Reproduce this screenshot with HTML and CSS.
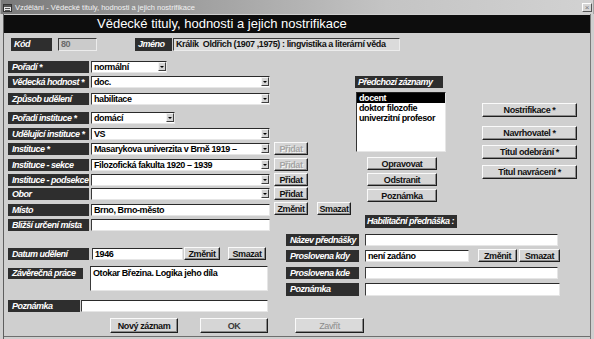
FILE: index.html
```html
<!DOCTYPE html>
<html lang="cs">
<head>
<meta charset="utf-8">
<title>Vzdělání</title>
<link rel="stylesheet" href="styles.css">
</head>
<body>
<div class="window">
  <div class="titlebar">
    <svg class="ticon" width="9" height="8" viewBox="0 0 9 8"><rect x="0.5" y="0.5" width="8" height="7" fill="#e8e8e8" stroke="#333"/><rect x="1" y="1" width="7" height="2" fill="#555"/><line x1="2" y1="4.5" x2="7" y2="4.5" stroke="#555"/><line x1="2" y1="6.5" x2="7" y2="6.5" stroke="#555"/></svg>
    <span class="ttext">Vzdělání - Vědecké tituly, hodnosti a jejich nostrifikace</span>
    <span class="tclose">×</span>
  </div>
  <div class="client">
    <div class="banner">Vědecké tituly, hodnosti a jejich nostrifikace</div>

    <div class="idrow">
      <div class="lbl lbl-kod">Kód</div>
      <div class="ro ro-kod">80</div>
      <div class="lbl lbl-jmeno">Jméno</div>
      <div class="ro ro-jmeno">Králík&nbsp; Oldřich (1907 ,1975) : lingvistika a literární věda</div>
    </div>

    <div class="sec-a">
      <div class="col-left">
        <div class="row r-poradi"><div class="lbl">Pořadí *</div><div class="fld combo w-s">normální<span class="arr"></span></div></div>
        <div class="row r-hodnost"><div class="lbl">Vědecká hodnost *</div><div class="fld combo w-l">doc.<span class="arr"></span></div></div>
        <div class="row r-zpusob"><div class="lbl">Způsob udělení</div><div class="fld combo w-l">habilitace<span class="arr"></span></div></div>
        <div class="row r-porinst"><div class="lbl">Pořadí instituce *</div><div class="fld combo w-m">domácí<span class="arr"></span></div></div>
        <div class="row r-udel"><div class="lbl">Udělující instituce *</div><div class="fld combo w-l">VS<span class="arr"></span></div></div>
        <div class="row r-inst"><div class="lbl">Instituce *</div><div class="fld combo w-l">Masarykova univerzita v Brně 1919 –<span class="arr"></span></div><button class="btn btn-add disabled">Přidat</button></div>
        <div class="row r-sekce"><div class="lbl">Instituce - sekce</div><div class="fld combo w-l">Filozofická fakulta 1920 – 1939<span class="arr"></span></div><button class="btn btn-add disabled">Přidat</button></div>
        <div class="row r-podsekce"><div class="lbl">Instituce - podsekce</div><div class="fld combo w-l"><span class="arr"></span></div><button class="btn btn-add">Přidat</button></div>
        <div class="row r-obor"><div class="lbl">Obor</div><div class="fld combo w-l"><span class="arr"></span></div><button class="btn btn-add">Přidat</button></div>
        <div class="row r-misto"><div class="lbl">Místo</div><div class="fld w-l">Brno, Brno-město</div><button class="btn btn-add">Změnit</button><button class="btn btn-del">Smazat</button></div>
      </div>

      <div class="col-mid">
        <div class="lbl lbl-pred">Předchozí záznamy</div>
        <div class="listbox">
          <div class="item selected">docent</div>
          <div class="item">doktor filozofie</div>
          <div class="item">univerzitní profesor</div>
        </div>
        <button class="btn btn-mid btn-oprav">Opravovat</button>
        <button class="btn btn-mid">Odstranit</button>
        <button class="btn btn-mid">Poznámka</button>
      </div>

      <div class="col-right">
        <button class="btn btn-side b-nostr">Nostrifikace *</button>
        <button class="btn btn-side b-navrh">Navrhovatel *</button>
        <button class="btn btn-side b-odebr">Titul odebrání *</button>
        <button class="btn btn-side b-navr">Titul navrácení *</button>
      </div>
    </div>

    <div class="sec-b">
      <div class="col-left2">
        <div class="row r-blizsi"><div class="lbl">Bližší určení místa</div><div class="fld w-l">&nbsp;</div></div>
        <div class="row r-datum"><div class="lbl">Datum udělení</div><div class="fld fld-datum">1946</div><button class="btn b-dzmen">Změnit</button><button class="btn b-dsmaz">Smazat</button></div>
        <div class="row r-prace"><div class="lbl lbl-prace">Závěrečná práce</div><div class="fld area">Otokar Březina. Logika jeho díla</div></div>
        <div class="row r-pozn"><div class="lbl lbl-pozn">Poznámka</div><div class="fld fld-pozn">&nbsp;</div></div>
      </div>

      <div class="col-hab">
        <div class="lbl lbl-hab">Habilitační přednáška :</div>
        <div class="row h-nazev"><div class="lbl lbl-h">Název přednášky</div><div class="fld w-h">&nbsp;</div></div>
        <div class="row h-kdy"><div class="lbl lbl-h">Proslovena kdy</div><div class="fld fld-kdy">není zadáno</div><button class="btn b-hzmen">Změnit</button><button class="btn b-hsmaz">Smazat</button></div>
        <div class="row h-kde"><div class="lbl lbl-h">Proslovena kde</div><div class="fld w-h">&nbsp;</div></div>
        <div class="row h-pozn"><div class="lbl lbl-h">Poznámka</div><div class="fld w-h2">&nbsp;</div></div>
      </div>
    </div>

    <div class="sec-c">
      <button class="btn btn-bottom b-novy">Nový záznam</button>
      <button class="btn btn-bottom b-ok">OK</button>
      <button class="btn btn-bottom b-zavrit">Zavřít</button>
    </div>
  </div>
</div>
</body>
</html>
```

FILE: styles.css
```css
* { box-sizing: border-box; margin: 0; padding: 0; }

html, body {
  width: 594px;
  height: 339px;
  overflow: hidden;
  background: #cfcfcf;
}

body {
  font-family: "Liberation Sans", Arial, sans-serif;
}

.window {
  width: 594px;
  height: 339px;
  display: flex;
  flex-direction: column;
  background: #cfcfcf;
  box-shadow: inset 0 0 0 1px #a4a4a4;
}

/* ---------- title bar ---------- */
.titlebar {
  flex: none;
  height: 14px;
  margin: 0 1px;
  padding-top: 1px;
  display: flex;
  align-items: center;
  background: linear-gradient(to right, #7a7a7a 0%, #9c9c9c 30%, #c4c4c4 65%, #d2d2d2 100%);
}

.ticon { margin-left: 2px; flex: none; }

.ttext {
  margin-left: 3px;
  font-size: 7.5px;
  color: #f2f2f2;
  white-space: nowrap;
}

.tclose {
  margin-left: auto;
  margin-right: 1px;
  width: 10px;
  height: 9px;
  background: #d6d6d6;
  border-top: 1px solid #fff;
  border-left: 1px solid #fff;
  border-right: 1px solid #555;
  border-bottom: 1px solid #555;
  font-size: 8px;
  line-height: 7px;
  text-align: center;
  color: #777;
}

/* ---------- client area ---------- */
.client {
  flex: 1;
  display: flex;
  flex-direction: column;
  background:
    linear-gradient(#5e5e5e, #5e5e5e) 3px 0 / 1px 100% no-repeat,
    linear-gradient(#7a7a7a, #7a7a7a) 590px 0 / 1px 100% no-repeat,
    linear-gradient(#6e6e6e, #6e6e6e) 3px 322px / 588px 1px no-repeat,
    #cfcfcf;
}

.banner {
  margin: 1px 0 0 4px;
  width: 586px;
  height: 18px;
  background: #0d0d0d;
  color: #fff;
  font-size: 13px;
  line-height: 18px;
  padding-left: 93px;
  white-space: nowrap;
}

/* ---------- generic controls ---------- */
.lbl {
  flex: none;
  width: 81px;
  height: 12px;
  background: #2e2e2e;
  color: #fff;
  font-style: italic;
  font-weight: bold;
  font-size: 9px;
  letter-spacing: -0.5px;
  line-height: 12px;
  padding-left: 4px;
  white-space: nowrap;
  overflow: hidden;
}

.fld {
  flex: none;
  height: 12px;
  margin-left: 2px;
  background: #fff;
  border-top: 1px solid #2a2a2a;
  border-left: 1px solid #3a3a3a;
  border-right: 1px solid #e6e6e6;
  border-bottom: 1px solid #e6e6e6;
  font-weight: bold;
  font-size: 9px;
  letter-spacing: -0.4px;
  line-height: 10px;
  padding-left: 2px;
  color: #000;
  white-space: nowrap;
  overflow: hidden;
}

.combo {
  display: flex;
  align-items: flex-start;
}

.arr {
  margin-left: auto;
  width: 8px;
  height: 9px;
  background: #d4d4d4;
  border-top: 1px solid #f4f4f4;
  border-left: 1px solid #f4f4f4;
  border-right: 1px solid #404040;
  border-bottom: 1px solid #404040;
  display: flex;
  align-items: center;
  justify-content: center;
}

.arr::before {
  content: "";
  border-left: 2px solid transparent;
  border-right: 2px solid transparent;
  border-top: 2px solid #000;
}

.w-s { width: 76px; }
.w-m { width: 84px; }
.w-l { width: 179px; }

.btn {
  flex: none;
  height: 13px;
  background: #d6d6d6;
  border-top: 1px solid #fafafa;
  border-left: 1px solid #fafafa;
  border-right: 1px solid #1e1e1e;
  border-bottom: 1px solid #1e1e1e;
  box-shadow: inset -1px -1px 0 #8a8a8a;
  font-family: "Liberation Sans", Arial, sans-serif;
  font-weight: bold;
  font-size: 9px;
  letter-spacing: -0.4px;
  line-height: 10px;
  color: #111;
  display: flex;
  align-items: center;
  justify-content: center;
  white-space: nowrap;
}

.btn.disabled {
  color: #a4a4a4;
  text-shadow: 1px 1px 0 #f4f4f4;
}

.row {
  display: flex;
  align-items: flex-start;
  height: 12px;
}

/* ---------- id row ---------- */
.idrow {
  display: flex;
  margin-top: 5px;
  height: 13px;
}

.lbl-kod { margin-left: 11px; width: 41px; height: 13px; line-height: 13px; padding-left: 3px; }
.lbl-jmeno { margin-left: 38px; width: 37px; height: 13px; line-height: 13px; padding-left: 3px; }

.ro {
  height: 13px;
  border-top: 1px solid #3a3a3a;
  border-left: 1px solid #3a3a3a;
  border-right: 1px solid #ececec;
  border-bottom: 1px solid #ececec;
  font-weight: bold;
  font-size: 9px;
  letter-spacing: -0.4px;
  line-height: 11px;
  padding-left: 2px;
  white-space: nowrap;
  overflow: hidden;
}

.ro-kod { margin-left: 6px; width: 39px; background: #cbcbcb; color: #6a6a6a; }
.ro-jmeno { margin-left: 1px; width: 227px; background: #dbdbdb; color: #111; }

/* ---------- section A ---------- */
.sec-a {
  display: flex;
  align-items: flex-start;
  margin-top: 10px;
  height: 154px;
}

.col-left {
  margin-left: 8px;
  width: 344px;
  display: flex;
  flex-direction: column;
}

.r-hodnost { margin-top: 3px; }
.r-zpusob { margin-top: 5px; }
.r-porinst { margin-top: 7px; }
.r-udel { margin-top: 4px; }
.r-inst { margin-top: 3px; }
.r-sekce { margin-top: 4px; }
.r-podsekce { margin-top: 3px; }
.r-obor { margin-top: 2px; }
.r-misto { margin-top: 4px; }

.btn-add { margin-left: 4px; width: 34px; margin-top: -1px; }
.btn-del { margin-left: 9px; width: 34px; margin-top: -2px; }
.r-misto .btn-add { margin-top: -2px; }

.col-mid {
  margin-left: 3px;
  width: 91px;
  display: flex;
  flex-direction: column;
}

.lbl-pred { margin-top: 15px; width: 88px; padding-left: 3px; }

.listbox {
  margin-top: 4px;
  margin-left: 1px;
  width: 90px;
  height: 60px;
  background: #fff;
  border-top: 1px solid #222;
  border-left: 1px solid #333;
  border-right: 1px solid #e6e6e6;
  border-bottom: 1px solid #e6e6e6;
  padding-top: 0;
}

.item {
  height: 10px;
  font-weight: bold;
  font-size: 9px;
  letter-spacing: -0.4px;
  line-height: 10px;
  padding-left: 2px;
  color: #000;
  white-space: nowrap;
}

.item.selected { background: #000; color: #fff; }

.btn-mid { margin-left: 12px; width: 70px; margin-top: 3px; }
.btn-oprav { margin-top: 5px; }

.col-right {
  margin-left: 36px;
  width: 95px;
  display: flex;
  flex-direction: column;
}

.btn-side { width: 95px; height: 14px; }
.b-nostr { margin-top: 42px; }
.b-navrh { margin-top: 9px; }
.b-odebr { margin-top: 5px; }
.b-navr { margin-top: 6px; }

/* ---------- section B ---------- */
.sec-b {
  display: flex;
  align-items: flex-start;
}

.col-left2 {
  margin-left: 8px;
  width: 262px;
  display: flex;
  flex-direction: column;
}

.r-blizsi { margin-top: 4px; }

.r-datum { margin-top: 16px; height: 13px; }
.r-datum .lbl { margin-top: 1px; }
.fld-datum { margin-left: 3px; margin-top: 1px; width: 91px; }
.b-dzmen { margin-left: 1px; width: 36px; }
.b-dsmaz { margin-left: 8px; width: 38px; }

.r-prace { margin-top: 6px; height: 25px; }
.lbl-prace { margin-top: 2px; width: 75px; height: 11px; line-height: 11px; }
.area { margin-left: 7px; width: 178px; height: 25px; padding-top: 1px; }

.r-pozn { margin-top: 9px; }
.lbl-pozn { width: 72px; }
.fld-pozn { margin-left: 1px; width: 187px; }

.col-hab {
  margin-left: 16px;
  width: 274px;
  display: flex;
  flex-direction: column;
}

.lbl-hab { margin-left: 79px; width: 92px; height: 13px; line-height: 13px; padding-left: 2px; }

.lbl-h { width: 73px; }
.col-hab .fld { margin-left: 6px; }
.w-h { width: 193px; }
.w-h2 { width: 195px; }
.fld-kdy { width: 104px; }

.h-nazev { margin-top: 6px; }
.h-kdy { margin-top: 4px; }
.h-kde { margin-top: 5px; }
.h-pozn { margin-top: 4px; height: 13px; }
.h-pozn .lbl, .h-pozn .fld { height: 13px; }

.b-hzmen { margin-left: 9px; width: 39px; margin-top: -1px; }
.b-hsmaz { margin-left: 2px; width: 41px; margin-top: -1px; }

/* ---------- section C ---------- */
.sec-c {
  display: flex;
  margin-top: 6px;
}

.btn-bottom { height: 15px; }
.b-novy { margin-left: 110px; width: 68px; }
.b-ok { margin-left: 22px; width: 68px; color: #3a3a3a; }
.b-zavrit { margin-left: 27px; width: 69px; color: #8a8a8a; font-weight: normal; background: #dadada; }
```
